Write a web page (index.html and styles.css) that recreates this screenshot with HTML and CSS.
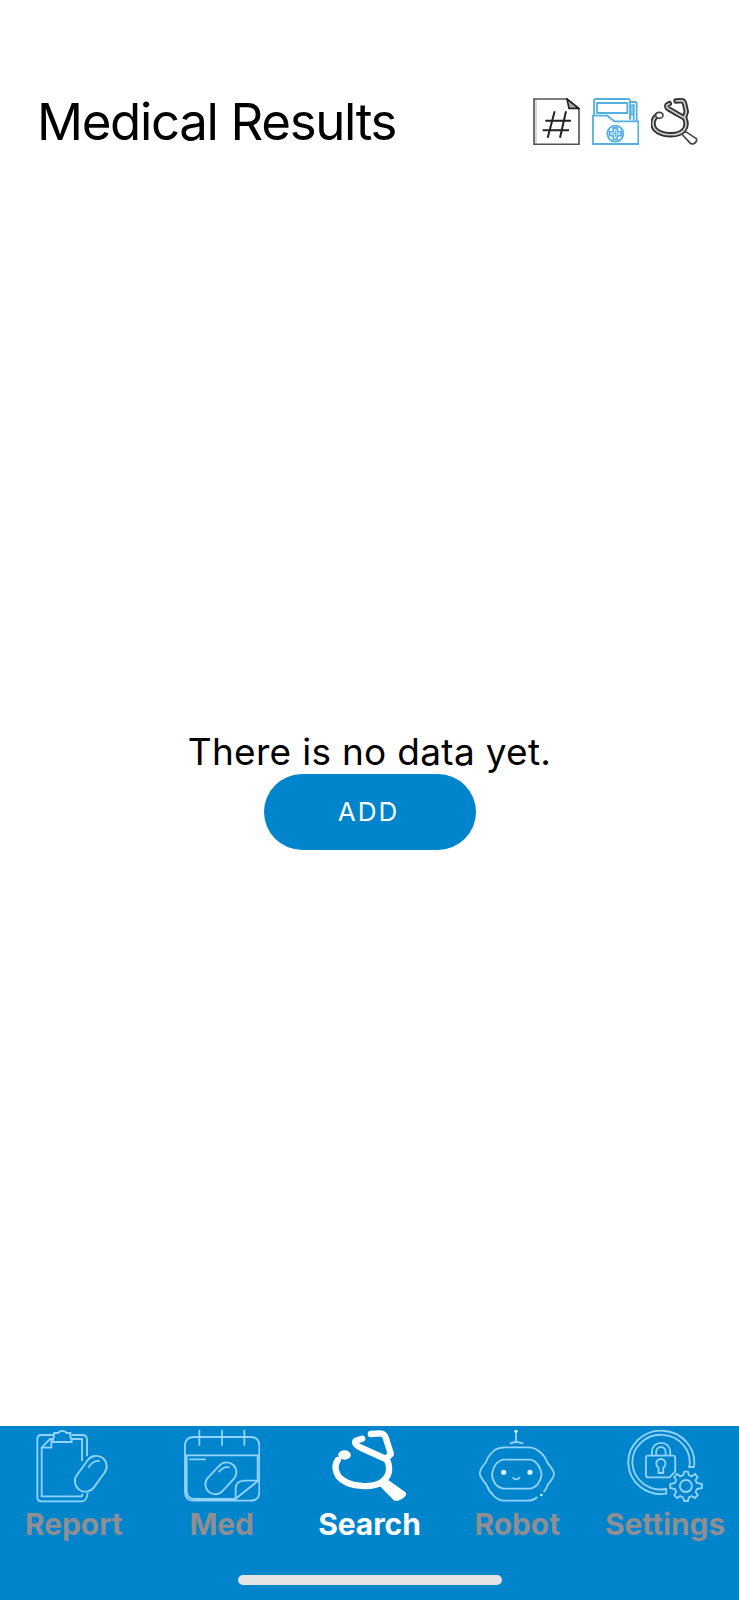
FILE: index.html
```html
<!DOCTYPE html>
<html lang="en">
<head>
<meta charset="utf-8">
<title>Medical Results</title>
<link rel="stylesheet" href="styles.css">
</head>
<body>
<div class="screen">
  <header class="header">
    <h1 class="title">Medical Results</h1>
    <div class="actions">
      <svg class="action dark" viewBox="39 39 141 141">
        <path class="frame" d="M42 42H141L177 73V178H42Z"/>
        <path d="M48 44V176" stroke-width="3" opacity=".35"/>
        <path class="fold" d="M141 42L147 70H176Z"/>
        <path d="M104 79L83 158M138 79L120 158M76 107H153M68 136H147" stroke-width="6"/>
      </svg>
      <svg class="action blue" viewBox="216 39 141 141">
        <path d="M222 91V48Q222 42 228 42H324Q330 42 330 48V104M231 54H322V84H231ZM331 51H345Q350 51 350 57V108M341 56V107M331 60V104"/>
        <path d="M332 62H340V88H332Z"/>
        <path d="M219 92H262L283 109H355V177H219Z"/>
        <circle cx="286" cy="146" r="24"/>
        <path d="M280 129H292V140H303V152H292V163H280V152H269V140H280Z"/>
        <path d="M286 136V156M276 146H296" stroke-width="3"/>
      </svg>
      <svg class="action" viewBox="393 39 141 141">
        <g class="tube-edge">
          <path d="M468 48L484 47Q492 47 494 57L499 80L493 99L448 73Q437 67 441 60L448 56"/>
          <path d="M494 99Q504 121 491 136C475 155 425 153 406 134Q393 117 404 99L411 91"/>
        </g>
        <path class="handle" d="M485 147L497 140L529 161Q533 171 519 177L512 176Z"/>
        <g class="tube-fill">
          <path d="M468 48L484 47Q492 47 494 57L499 80L493 99L448 73Q437 67 441 60L448 56"/>
          <path d="M494 99Q504 121 491 136C475 155 425 153 406 134Q393 117 404 99L411 91"/>
        </g>
        <ellipse class="handle" cx="418" cy="91" rx="11" ry="9"/>
      </svg>
    </div>
  </header>
  <main class="content">
    <p class="empty">There is no data yet.</p>
    <button class="add">ADD</button>
  </main>
  <nav class="tabs">
    <a class="tab">
      <svg class="icon" viewBox="78 39 228 228">
        <path d="M129 60H94Q82 60 82 72V246Q82 259 94 259H216Q230 259 233 234M184 60H217Q231 60 231 74V124"/>
        <path d="M129 72H120L95 98V244H214Q217 244 217 236M184 72H216V138M124 76V98H98"/>
        <path d="M132 54H145Q147 48 157 48Q167 48 169 54H181V66Q185 69 185 81H129Q129 69 132 66Z"/>
        <rect x="211" y="117" width="63" height="118" rx="31.5" transform="rotate(36 242 176)"/>
        <path d="M235 158Q249 135 269 138"/>
      </svg>
      <span class="label">Report</span>
    </a>
    <a class="tab">
      <svg class="icon" viewBox="71 39 228 228">
        <path d="M108 66H101Q74 66 74 93V230Q74 257 101 257H270Q297 257 297 230V93Q297 66 270 66H260M108 66H260M117 44V92M185 44V92M252 44V92"/>
        <path d="M74 121H297M79 124V229Q80 251 102 252H226M292 124V197M86 133H136"/>
        <rect x="152" y="135" width="59" height="109" rx="29.5" transform="rotate(43 181 190)"/>
        <path d="M175 172Q188 153 208 157M226 254V220Q227 198 252 197H294L226 251"/>
      </svg>
      <span class="label">Med</span>
    </a>
    <a class="tab active">
      <svg class="icon" viewBox="79.5 39 228 228">
        <path class="tube" d="M199 57L226 55Q240 55 244 69L259 117L244 132L171 99Q146 88 154 77L173 71"/>
        <path class="tube" d="M246 130Q264 169 241 193C213 225 127 217 101 183Q85 155 100 135"/>
        <ellipse class="solid" cx="120" cy="120" rx="19" ry="14"/>
        <path class="solid" d="M221 207L244 190L302 231Q308 236 302 244Q289 257 275 258Q268 258 264 252L231 218Z"/>
      </svg>
      <span class="label">Search</span>
    </a>
    <a class="tab">
      <svg class="icon" viewBox="73 39 228 228">
        <path d="M184 50V80M166 86Q184 76 206 86"/>
        <circle class="solid" cx="184" cy="49" r="5"/>
        <path d="M248 246Q236 257 218 257H148Q134 257 119 244Q103 230 95 209Q75 184 75 175Q78 159 93 143Q100 122 119 106Q132 97 150 97H220Q239 97 252 108Q271 122 278 143Q297 166 298 176Q298 187 279 209Q276 221 267 231"/>
        <path d="M145 134H227Q240 136 251 151Q259 164 261 178Q259 194 249 208Q237 220 225 221H146Q132 219 122 207Q112 191 112 177Q114 160 124 147Q134 136 145 134Z"/>
        <circle class="solid" cx="147" cy="172" r="8"/><circle class="solid" cx="226" cy="172" r="8"/>
        <path d="M174 187Q184 199 196 187"/>
        <circle class="solid" cx="260" cy="240" r="4"/>
      </svg>
      <span class="label">Robot</span>
    </a>
    <a class="tab">
      <svg class="icon" viewBox="96.3 39 228 228">
        <path d="M214 236A99 95 0 1 1 297 156H283A86 82 0 1 0 214 222Z"/>
        <path d="M160 122H234Q241 122 241 129V169L224 187H160Q153 187 153 180V129Q153 122 160 122ZM171 121V110A27 26 0 0 1 226 110V121M184 121V110A14 14 0 0 1 212 110V121"/>
        <path d="M191 158A14 14 0 1 1 205 158V174H191Z"/>
        <path d="M265 180L268 170H279L282 180L290 184L300 177L308 186L302 195L306 204L321 207V219L306 222L302 231L309 240L300 249L290 243L282 247L279 258H268L264 247L256 243L246 249L238 240L244 231L240 222L226 219V207L240 204L244 195L238 186L246 177L256 184Z"/>
        <circle cx="273" cy="213" r="18"/>
      </svg>
      <span class="label">Settings</span>
    </a>
    <div class="home-bar"></div>
  </nav>
</div>
</body>
</html>
```
FILE: styles.css
```css
body {
  margin: 0;
  background: #fff;
  font-family: Inter, "Liberation Sans", sans-serif;
}
.screen {
  height: 1600px;
  display: flex;
  flex-direction: column;
}
.header {
  box-sizing: border-box;
  height: 160px;
  padding: 98px 41px 0 37px;
  display: flex;
  justify-content: space-between;
  align-items: flex-start;
}
.title {
  margin: -7px 0 0;
  font-size: 51px;
  line-height: 62px;
  font-weight: 400;
  letter-spacing: -1.35px;
  color: #000;
  white-space: nowrap;
}
.actions {
  display: flex;
  gap: 12px;
}
.action {
  width: 47px;
  height: 47px;
  fill: none;
}
.dark { stroke: #222; }
.frame { stroke: #555; stroke-width: 5; }
.fold { fill: #aaa; stroke-width: 5; }
.blue {
  stroke: #55b0e0;
  stroke-width: 5.5;
}
.tube-edge {
  stroke: #333;
  stroke-width: 16;
  stroke-linecap: round;
  stroke-linejoin: round;
}
.tube-fill {
  stroke: #ccc;
  stroke-width: 5;
  stroke-linecap: round;
  stroke-linejoin: round;
}
.handle {
  fill: #fff;
  stroke: #444;
  stroke-width: 5;
  stroke-linejoin: round;
}
.content {
  flex: 1;
  padding-top: 570px;
  display: flex;
  flex-direction: column;
  align-items: center;
}
.empty {
  margin: 0;
  font-size: 37px;
  line-height: 44px;
  letter-spacing: 0.3px;
  color: #000;
  white-space: nowrap;
}
.add {
  width: 212px;
  height: 76px;
  padding: 0 2px 2px 0;
  border: 0;
  border-radius: 38px;
  background: #0085cc;
  color: #fff;
  font-family: inherit;
  font-size: 26px;
  font-weight: 400;
  letter-spacing: 2px;
}
.tabs {
  height: 174px;
  background: #0085cc;
  display: grid;
  grid-template-columns: repeat(5, 1fr);
  grid-template-rows: 149px 10px;
}
.tab {
  padding-top: 2px;
  display: flex;
  flex-direction: column;
  align-items: center;
  color: #8e8e93;
}
.active { color: #fff; }
.icon {
  width: 76px;
  height: 76px;
  fill: none;
  stroke: #92d2ff;
  stroke-width: 5.5;
}
.icon .solid {
  fill: #d5efff;
  stroke: none;
}
.active .solid { fill: #fff; }
.icon .tube {
  stroke: #fff;
  stroke-width: 19;
  stroke-linecap: round;
  stroke-linejoin: round;
}
.label {
  margin-top: 2px;
  font-size: 30px;
  line-height: 36px;
  font-weight: 700;
  letter-spacing: -0.1px;
  white-space: nowrap;
}
.home-bar {
  grid-column: 1 / -1;
  justify-self: center;
  width: 264px;
  height: 10px;
  border-radius: 5px;
  background: #e4e4e6;
}
```
